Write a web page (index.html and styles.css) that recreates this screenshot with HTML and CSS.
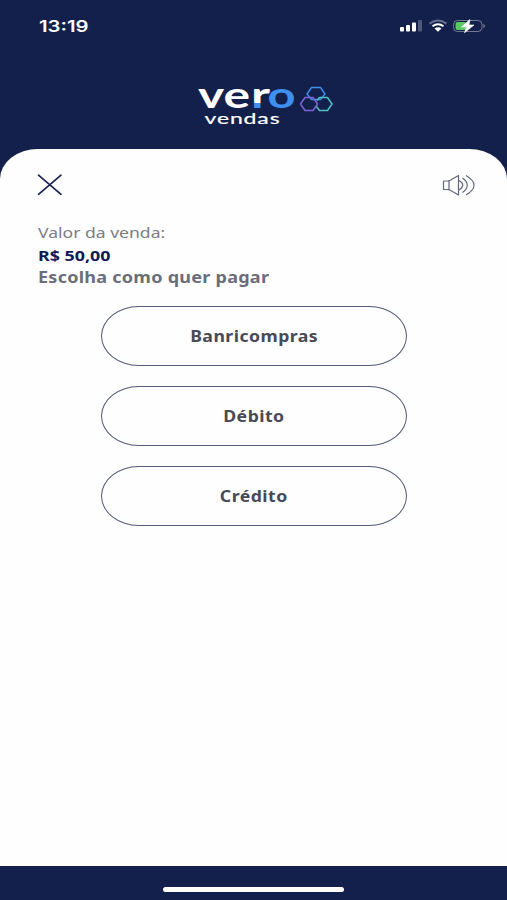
FILE: index.html
```
<!DOCTYPE html>
<html lang="pt-BR">
<head>
    <meta charset="UTF-8">
    <meta name="viewport" content="width=device-width, initial-scale=1.0">
    <title>Vero Vendas</title>
    <link rel="stylesheet" href="styles.css">
</head>
<body>
    <div class="status-bar">
        <span class="time">13:19</span>
        <svg class="status-icons" width="88" height="16" viewBox="0 0 88 16">
            <!-- Signal -->
            <g fill="#fff">
                <rect x="1" y="9" width="4" height="4.500" rx="1"/>
                <rect x="7" y="7" width="4" height="6.500" rx="1"/>
                <rect x="13" y="4.500" width="4" height="9" rx="1"/>
                <rect x="19" y="2" width="4" height="11.500" rx="1" opacity=".25"/>
            </g>
            <!-- Wi-Fi -->
            <g fill="none" stroke="#fff" stroke-width="2">
                <path d="M30.500 5.600Q39 -.4 47.500 5.600" opacity=".35"/>
                <path d="M33.500 8.200Q39 4.200 44.500 8.200"/>
            </g>
            <path d="M35.500 10.500Q39 8.200 42.500 10.500L39 13.800Z" fill="#fff"/>
            <!-- Battery -->
            <rect x="54.500" y="2.500" width="28.500" height="11" rx="4" fill="none" stroke="#fff" opacity=".4"/>
            <path d="M84.500 5.500Q87 8 84.500 10.500Z" fill="#fff" opacity=".5"/>
            <rect x="56.500" y="4" width="11" height="8" rx="2" fill="#58c963"/>
            <path d="M71 1.500L62.500 9H67.500L65.500 14.800L75 7H70Z" fill="#fff" stroke="#fff" stroke-width=".6"/>
        </svg>
    </div>

    <header class="header">
        <svg class="logo" width="140" height="44" viewBox="0 0 140 44">
            <defs>
                <linearGradient id="r-color" gradientUnits="userSpaceOnUse" x1="0" y1="6" x2="0" y2="26">
                    <stop offset=".72" stop-color="#fff"/>
                    <stop offset=".72" stop-color="#3f8ff0"/>
                </linearGradient>
            </defs>
            <text class="logo-name" x="2" y="25" textLength="52" lengthAdjust="spacingAndGlyphs">ve</text>
            <text class="logo-name logo-r" x="55" y="25" textLength="19" lengthAdjust="spacingAndGlyphs">r</text>
            <text class="logo-name logo-o" x="71.500" y="25" textLength="28" lengthAdjust="spacingAndGlyphs">o</text>
            <text class="logo-sub" x="8.500" y="40.500" textLength="76" lengthAdjust="spacingAndGlyphs">vendas</text>
            <g fill="none" stroke-width="1.500" stroke-linejoin="round">
                <path stroke="#3b8fe8" d="M115.500 4.500H124.500L129 11L124.500 16.500H115.500L111 11Z"/>
                <path stroke="#8062d6" d="M109 14.500H117L121.500 21L117 27.500H109L104.500 21Z"/>
                <path stroke="#50bfc0" d="M121 17.500L123.500 14.500H131.500L136 21L131.500 27.500H123.500L120.500 23.500"/>
            </g>
        </svg>
    </header>

    <main class="card">
        <div class="toolbar">
            <button class="icon-button" aria-label="Fechar">
                <svg width="26" height="22" viewBox="0 0 26 22">
                    <path d="M1.500 1.200L24 20.300M24 1.200L1.500 20.300" stroke="#1b2350" stroke-width="1.700" stroke-linecap="round"/>
                </svg>
            </button>
            <button class="icon-button" aria-label="Som">
                <svg width="34" height="24" viewBox="0 0 34 24" fill="none" stroke="#62667f" stroke-width="1.200" stroke-linejoin="round">
                    <path d="M7 8H1.500V16.500H7M7 7V17.500M7 8L16.500 2.500V22L7 16.500"/>
                    <path d="M17 7.500Q24.500 12 17 17M20.500 5Q30 12 20.500 19.500M24 2.500Q40 12 24 22"/>
                </svg>
            </button>
        </div>

        <div class="sale">
            <p class="sale-label">Valor da venda:</p>
            <p class="sale-value">R$ 50,00</p>
            <p class="sale-question">Escolha como quer pagar</p>
        </div>

        <div class="options">
            <button class="option"><span>Banricompras</span></button>
            <button class="option"><span>Débito</span></button>
            <button class="option"><span>Crédito</span></button>
        </div>
    </main>

    <footer class="footer">
        <div class="home-indicator"></div>
    </footer>
</body>
</html>
```

FILE: styles.css
```
* {
    box-sizing: border-box;
}

body {
    margin: 0;
    height: 100vh;
    display: flex;
    flex-direction: column;
    background-color: #14204c;
    font-family: 'Noto Sans', sans-serif;
    overflow: hidden;
}

.status-bar {
    height: 52px;
    padding: 0 20px 0 39px;
    display: flex;
    justify-content: space-between;
    align-items: center;
    color: #fff;
}

.time {
    font-family: Inter, sans-serif;
    font-size: 16px;
    font-weight: 600;
    transform: scaleX(1.27);
    transform-origin: left;
}

.header {
    height: 97px;
    padding: 31px 0 0 196px;
}

.logo {
    display: block;
    overflow: visible;
}

.logo-name {
    font-family: Lato, sans-serif;
    font-size: 36px;
    font-weight: 700;
    fill: #fff;
}

.logo-r {
    fill: url(#r-color);
}

.logo-o {
    fill: #3f8ff0;
}

.logo-sub {
    font-family: Lato, sans-serif;
    font-size: 16px;
    letter-spacing: 0.6px;
    fill: #fff;
    stroke: #fff;
    stroke-width: 0.2;
}

.card {
    flex: 1;
    padding: 24px 31px 0 37px;
    background-color: #fefefe;
    border-radius: 38px 38px 0 0 / 30px 30px 0 0;
}

.toolbar {
    display: flex;
    justify-content: space-between;
    align-items: center;
    height: 24px;
}

.icon-button {
    padding: 0;
    border: none;
    background: none;
    line-height: 0;
}

.sale {
    margin: 24px 0 0 1px;
}

.sale p {
    width: max-content;
    margin: 0;
    line-height: 22px;
    transform-origin: left;
}

.sale .sale-label {
    color: #7b7c84;
    font-size: 15px;
    line-height: 23px;
    transform: scaleX(1.17);
}

.sale .sale-value {
    color: #111a56;
    font-size: 15px;
    font-weight: 700;
    transform: scaleX(1.19);
}

.sale .sale-question {
    color: #6c6d7b;
    font-size: 15.5px;
    font-weight: 700;
    letter-spacing: 0.2px;
    transform: scaleX(1.165);
}

.options {
    display: flex;
    flex-direction: column;
    gap: 20px;
    width: 306px;
    margin: 17.5px 0 0 64px;
}

.option {
    height: 60.3px;
    padding: 0;
    border: 1.3px solid #555a7b;
    border-radius: 38px / 30px;
    background: none;
    color: #484a55;
    font-family: 'Noto Sans', sans-serif;
    font-size: 15.5px;
    font-weight: 700;
    letter-spacing: 0.4px;
}

.option span {
    display: inline-block;
    transform: scaleX(1.14);
}

.footer {
    display: flex;
    justify-content: center;
    height: 34px;
    padding-top: 21px;
}

.home-indicator {
    width: 181px;
    height: 5px;
    border-radius: 3px;
    background-color: #fff;
}
```
